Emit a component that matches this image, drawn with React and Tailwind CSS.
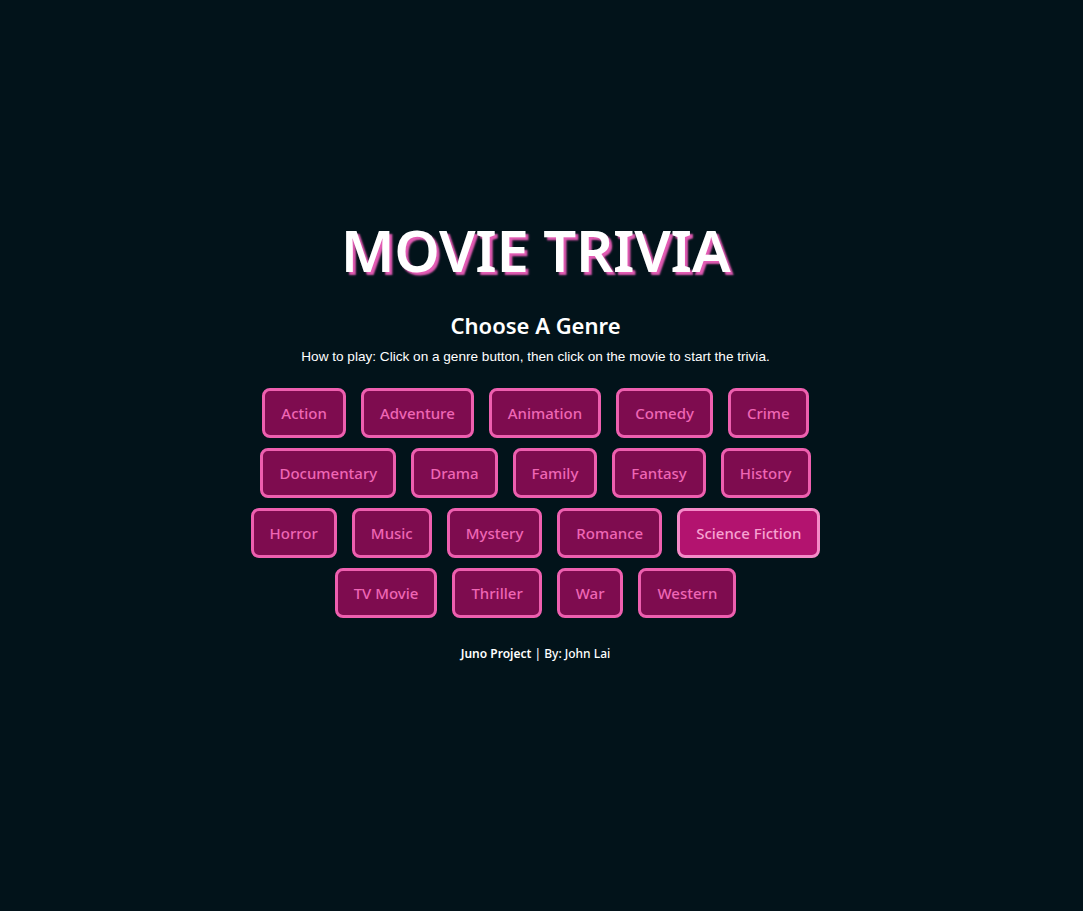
import React from "react";

const rows = [
  ["Action", "Adventure", "Animation", "Comedy", "Crime"],
  ["Documentary", "Drama", "Family", "Fantasy", "History"],
  ["Horror", "Music", "Mystery", "Romance", "Science Fiction"],
  ["TV Movie", "Thriller", "War", "Western"],
];

export default function App() {
  return (
    <div className="min-h-[911px] w-full bg-[#02131a] text-white flex flex-col items-center pt-[218px] pr-[12px] [font-family:'Noto_Sans',sans-serif]">
      <h1 className="text-[58px] leading-[64px] font-semibold tracking-[-0.3px] [text-shadow:3px_3px_2px_#e35bb4]">
        MOVIE TRIVIA
      </h1>
      <h2 className="mt-[28px] text-[22px] leading-[30px] font-semibold">Choose A Genre</h2>
      <p className="mt-[8px] text-[13.6px] leading-[18px] [font-family:'Liberation_Sans',sans-serif]">
        How to play: Click on a genre button, then click on the movie to start the trivia.
      </p>
      <div className="mt-[22px] flex flex-col items-center gap-[10px]">
        {rows.map((row, i) => (
          <div key={i} className="flex gap-[15px] justify-center">
            {row.map((g) => (
              <button
                key={g}
                className={
                  g === "Science Fiction"
                    ? "h-[50px] px-[16px] rounded-[8px] border-[3px] border-[#f58ac8] bg-[#b3136f] text-[#f7a3d2] text-[15px] font-medium"
                    : "h-[50px] px-[16px] rounded-[8px] border-[3px] border-[#ee5faf] bg-[#7e0c4f] text-[#ef66b5] text-[15px] font-medium"
                }
              >
                {g}
              </button>
            ))}
          </div>
        ))}
      </div>
      <p className="mt-[28px] text-[12px] leading-[16px] font-medium">
        <span className="font-semibold">Juno Project</span> | By: John Lai
      </p>
    </div>
  );
}
